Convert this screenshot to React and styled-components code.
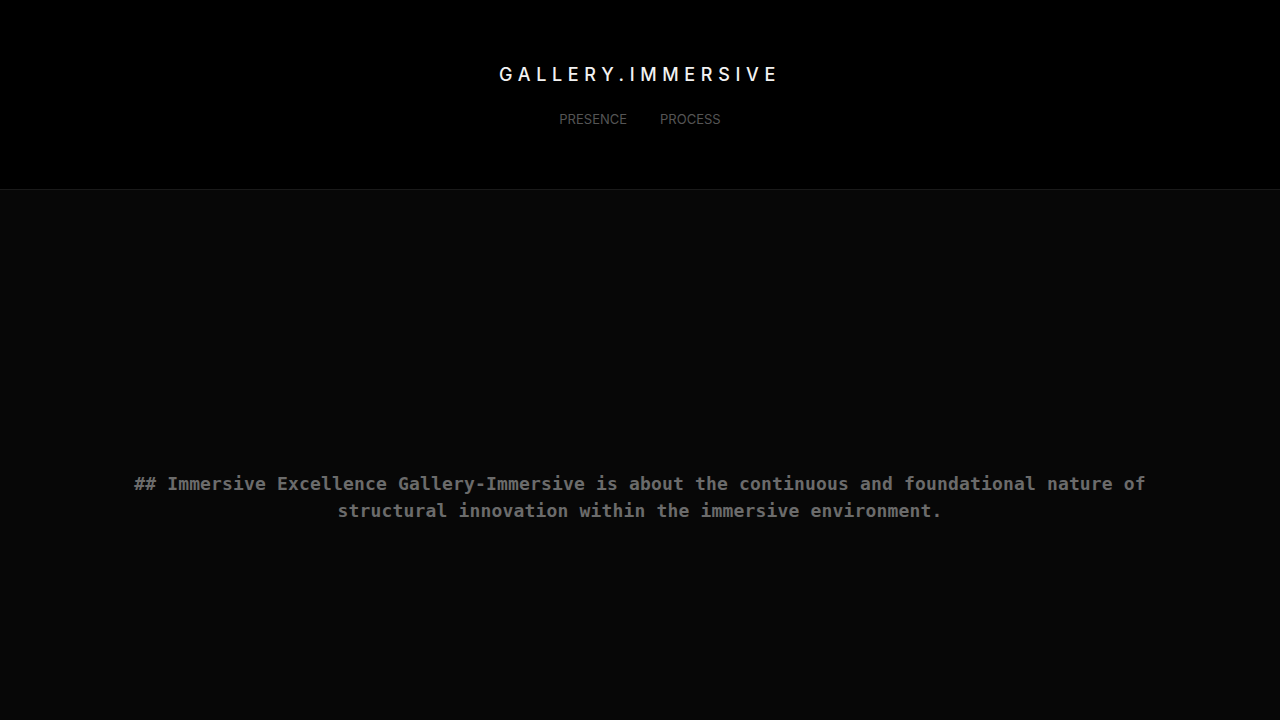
import React from 'react'
import styled, { createGlobalStyle } from 'styled-components'

const GlobalStyle = createGlobalStyle`
  html, body {
    margin: 0;
    padding: 0;
    background: #070707;
  }
`

const Page = styled.div`
  min-height: 720px;
  display: flex;
  flex-direction: column;
  background: #070707;
`

const Header = styled.header`
  background: #000;
  border-bottom: 1px solid #1a1a1a;
  height: 190px;
  box-sizing: border-box;
  padding-top: 62px;
  display: flex;
  flex-direction: column;
  align-items: center;
`

const Brand = styled.h1`
  margin: 0;
  font-family: Inter, "Open Sans", sans-serif;
  font-weight: 500;
  font-size: 18px;
  line-height: 26px;
  letter-spacing: 5.65px;
  color: #f2f2f2;
`

const Nav = styled.nav`
  display: flex;
  gap: 33px;
  margin-top: 22px;
`

const NavLink = styled.a`
  font-family: Inter, "Open Sans", sans-serif;
  font-size: 13px;
  line-height: 18px;
  color: #555;
  text-decoration: none;
  text-transform: uppercase;
`

const Main = styled.main`
  flex: 1;
  display: flex;
  justify-content: center;
  padding: 280px 120px 0;
`

const Statement = styled.p`
  margin: 0;
  max-width: 1040px;
  text-align: center;
  font-family: "DejaVu Sans Mono", "Liberation Mono", monospace;
  font-weight: 700;
  font-size: 18px;
  line-height: 27px;
  letter-spacing: 0.16px;
  color: #6b6b6b;
`

const App = () => {
  return (
    <>
      <GlobalStyle />
      <Page>
        <Header>
          <Brand>GALLERY.IMMERSIVE</Brand>
          <Nav>
            <NavLink href="#presence">Presence</NavLink>
            <NavLink href="#process">Process</NavLink>
          </Nav>
        </Header>
        <Main>
          <Statement>
            ## Immersive Excellence Gallery-Immersive is about the continuous and foundational nature of structural innovation within the immersive environment.
          </Statement>
        </Main>
      </Page>
    </>
  )
}

export default App
